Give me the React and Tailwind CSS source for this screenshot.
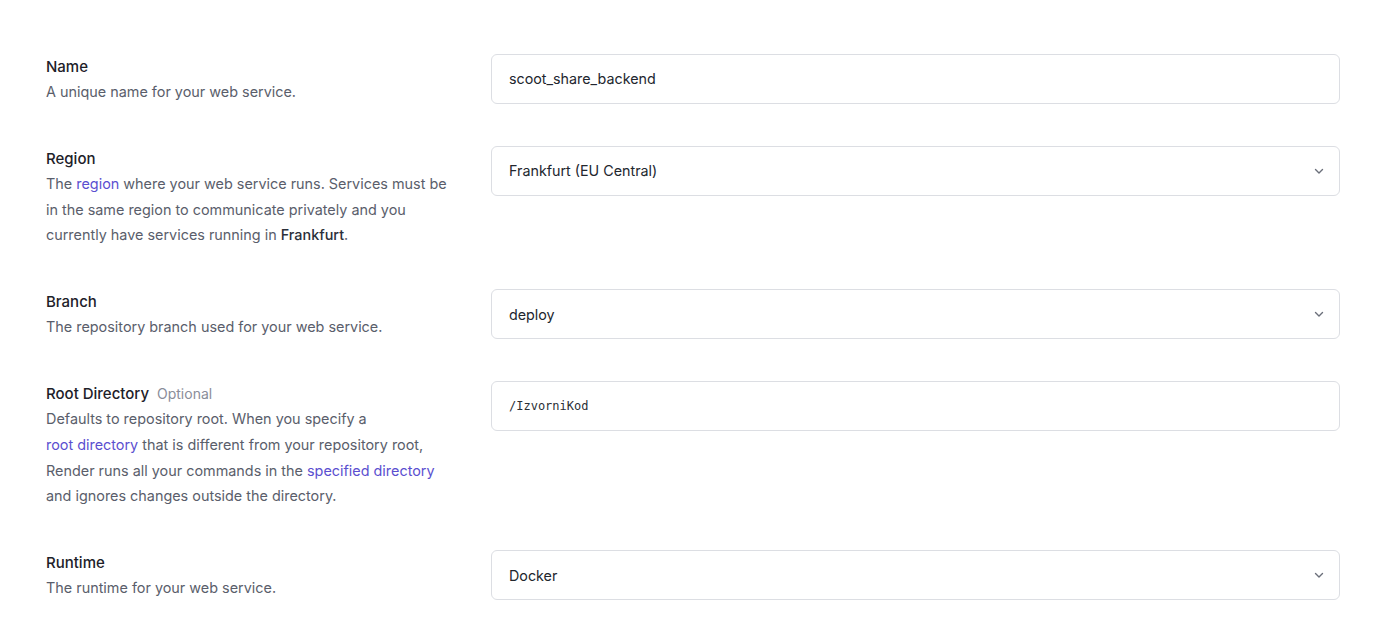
import React from "react";

const font = { fontFamily: "Inter, 'Noto Sans', sans-serif" };

function Chevron() {
  return (
    <svg width="12" height="12" viewBox="0 0 12 12" fill="none" className="shrink-0">
      <path d="M2.5 4.5L6 8l3.5-3.5" stroke="#6b6f7a" strokeWidth="1.4" strokeLinecap="round" strokeLinejoin="round" />
    </svg>
  );
}

function Field({ children, select, mono }) {
  return (
    <div className="h-[50px] w-full rounded-md border border-[#dcdee3] bg-white flex items-center justify-between pl-[17px] pr-[14px]">
      <span
        className={mono ? "text-[12px] text-[#2b2f36]" : "text-[14.3px] text-[#22262e]"}
        style={mono ? { fontFamily: "'DejaVu Sans Mono', 'Liberation Mono', monospace" } : undefined}
      >
        {children}
      </span>
      {select && <Chevron />}
    </div>
  );
}

function Row({ label, optional, desc, field }) {
  return (
    <div className="flex items-start">
      <div className="w-[445px] shrink-0 pr-[25px]">
        <div className="text-[15px] leading-[25px] font-medium text-[#1d2129]">
          {label}
          {optional && <span className="ml-2 text-[14px] font-normal text-[#8a8d99]">Optional</span>}
        </div>
        <div className="text-[14.4px] leading-[25.6px] text-[#5a5e6b]">{desc}</div>
      </div>
      <div className="w-[849px] shrink-0">{field}</div>
    </div>
  );
}

const Link = ({ children }) => <span className="text-[#5b4fd0]">{children}</span>;

export default function App() {
  return (
    <div className="min-h-[631px] bg-white pt-[54px] pl-[46px]" style={font}>
      <div className="flex flex-col gap-[41.5px]">
        <Row label="Name" desc="A unique name for your web service." field={<Field>scoot_share_backend</Field>} />
        <Row
          label="Region"
          desc={
            <>
              The <Link>region</Link> where your web service runs. Services must be
              <br />
              in the same region to communicate privately and you
              <br />
              currently have services running in <span className="font-medium text-[#2b2f3a]">Frankfurt</span>.
            </>
          }
          field={<Field select>Frankfurt (EU Central)</Field>}
        />
        <Row label="Branch" desc="The repository branch used for your web service." field={<Field select>deploy</Field>} />
        <Row
          label="Root Directory"
          optional
          desc={
            <>
              Defaults to repository root. When you specify a
              <br />
              <Link>root directory</Link> that is different from your repository root,
              <br />
              Render runs all your commands in the <Link>specified directory</Link>
              <br />
              and ignores changes outside the directory.
            </>
          }
          field={<Field mono>/IzvorniKod</Field>}
        />
        <Row label="Runtime" desc="The runtime for your web service." field={<Field select>Docker</Field>} />
      </div>
    </div>
  );
}
